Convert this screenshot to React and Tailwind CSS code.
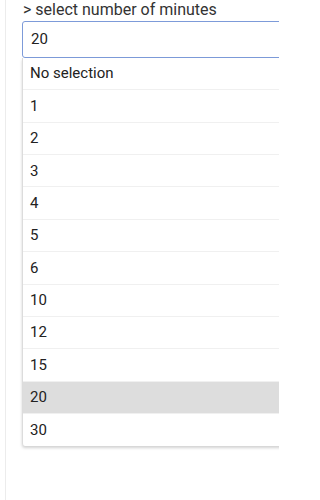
const options = ["No selection", "1", "2", "3", "4", "5", "6", "10", "12", "15", "20", "30"];

const App = () => {
    const selected = "20";

    return (
        <div className="w-[279px] h-[500px] overflow-hidden bg-white font-['Roboto',sans-serif]">
            <div className="ml-[5px] h-full border-l border-[#ececec] pl-[16px]">
                <p className="pl-px h-[21px] leading-[19px] text-[16px] text-[#333]">&gt; select number of minutes</p>
                <div className="w-[280px] h-[37px] flex items-center pl-[8px] border border-[#7d9bd9] rounded-l-[3px] text-[15px] text-[#222]">
                    {selected}
                </div>
                <ul className="w-[280px] border-l border-[#dcdcdc] rounded-bl-[3px] shadow-[0_2px_3px_rgba(0,0,0,0.18)] bg-white">
                    {options.map((opt) => (
                        <li
                            key={opt}
                            className={`h-[32.36px] flex items-center pl-[7px] text-[15px] text-[#222] border-b border-[#f0f0f0] last:border-b-0 ${opt === selected ? "bg-[#dddddd]" : ""}`}
                        >
                            {opt}
                        </li>
                    ))}
                </ul>
            </div>
        </div>
    );
};

export default App;
